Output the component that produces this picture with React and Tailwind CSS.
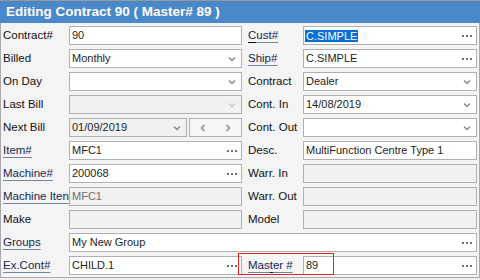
import React from 'react';

const FONT = { fontFamily: '"Liberation Sans", Arial, sans-serif' };

const Dots = () => (
    <div className="absolute right-[4px] top-1/2 -translate-y-1/2 flex gap-[2px]">
        <span className="w-[2px] h-[2px] bg-[#707070]" />
        <span className="w-[2px] h-[2px] bg-[#707070]" />
        <span className="w-[2px] h-[2px] bg-[#707070]" />
    </div>
);

const Chevron = ({ light }) => (
    <svg width="8" height="6" viewBox="0 0 8 6" className="absolute right-[5px] top-1/2 -translate-y-1/2">
        <path d="M1 1.5 L4 4.5 L7 1.5" fill="none" stroke={light ? '#c8c8c8' : '#8a8a8a'} strokeWidth="1.5" />
    </svg>
);

const Label = ({ children, link, right }) => (
    <div className={`h-[19px] flex items-center text-[11.5px] whitespace-nowrap overflow-hidden ${right ? 'pl-[6px]' : ''} ${link ? 'text-[#18264f]' : 'text-[#111]'}`}>
        <span className={link ? 'underline decoration-[#7384a6] underline-offset-[3px]' : ''}>{children}</span>
    </div>
);

const Field = ({ value, dots, combo, disabled, muted, selected, lightChevron, className = '' }) => (
    <div className={`relative h-[19px] border border-[#b0b0b0] flex items-center pl-[1px] text-[11px] ${disabled ? 'bg-[#f1f1f1]' : 'bg-white'} ${className}`}>
        {selected ? (
            <span className="bg-[#0a6fd4] text-white px-[1px] leading-[12px]">{value}</span>
        ) : (
            <span className={`px-[1px] ${muted ? 'text-[#6e6e6e]' : 'text-[#1e1e1e]'}`}>{value}</span>
        )}
        {dots && <Dots />}
        {combo && <Chevron light={lightChevron} />}
    </div>
);

const NavBox = () => (
    <div className="relative h-[19px] w-[53px] border border-[#b0b0b0] bg-[#f6f6f6] flex items-center justify-around">
        <svg width="6" height="8" viewBox="0 0 6 8">
            <path d="M4.5 1 L1.5 4 L4.5 7" fill="none" stroke="#8a8a8a" strokeWidth="1.5" />
        </svg>
        <svg width="6" height="8" viewBox="0 0 6 8">
            <path d="M1.5 1 L4.5 4 L1.5 7" fill="none" stroke="#8a8a8a" strokeWidth="1.5" />
        </svg>
    </div>
);

export default function App() {
    return (
        <div className="w-[480px] h-[280px] bg-[#f0f0f0] overflow-hidden" style={FONT}>
            {/* title bar */}
            <div className="h-[23px] bg-[#4a89c9] border-t border-[#9a9a9a] flex items-center pl-[6px]">
                <span className="text-white font-bold text-[13.5px]">Editing Contract 90 ( Master# 89 )</span>
            </div>

            {/* body */}
            <div className="relative h-[255px] bg-[#f4f4f4] border-l border-r border-b border-[#a9a9a9] pt-[3px] pl-[2px]">
                <div className="grid grid-cols-[66px_173px_61px_174px] gap-y-[4px]">
                    <Label>Contract#</Label>
                    <Field value="90" />
                    <Label right link><span className="underline decoration-[#111]">C</span>ust#</Label>
                    <Field value="C.SIMPLE" dots selected />

                    <Label>Billed</Label>
                    <Field value="Monthly" combo />
                    <Label right link>Ship#</Label>
                    <Field value="C.SIMPLE" dots />

                    <Label>On Day</Label>
                    <Field value="" combo />
                    <Label right>Contract</Label>
                    <Field value="Dealer" combo />

                    <Label>Last Bill</Label>
                    <Field value="" combo disabled lightChevron />
                    <Label right>Cont. In</Label>
                    <Field value="14/08/2019" combo />

                    <Label>Next Bill</Label>
                    <div className="flex gap-[2px]">
                        <Field value="01/09/2019" combo disabled className="w-[118px] text-[#333]" />
                        <NavBox />
                    </div>
                    <Label right>Cont. Out</Label>
                    <Field value="" combo />

                    <Label link>Item#</Label>
                    <Field value="MFC1" dots />
                    <Label right>Desc.</Label>
                    <Field value="MultiFunction Centre Type 1" />

                    <Label link>Machine#</Label>
                    <Field value="200068" dots />
                    <Label right>Warr. In</Label>
                    <Field value="" disabled />

                    <Label link>Machine Iten</Label>
                    <Field value="MFC1" disabled muted />
                    <Label right>Warr. Out</Label>
                    <Field value="" disabled />

                    <Label>Make</Label>
                    <Field value="" disabled />
                    <Label right>Model</Label>
                    <Field value="" disabled />

                    <Label link>Groups</Label>
                    <Field value="My New Group" dots className="col-span-3" />

                    <Label link>Ex.Cont#</Label>
                    <Field value="CHILD.1" dots />
                    <Label right link>Mas<span className="underline decoration-[#111]">t</span>er #</Label>
                    <Field value="89" dots />
                </div>

                {/* highlight box */}
                <div className="absolute left-[237px] top-[230px] w-[96px] h-[22px] border border-[#e02424]" />
            </div>
        </div>
    );
}
